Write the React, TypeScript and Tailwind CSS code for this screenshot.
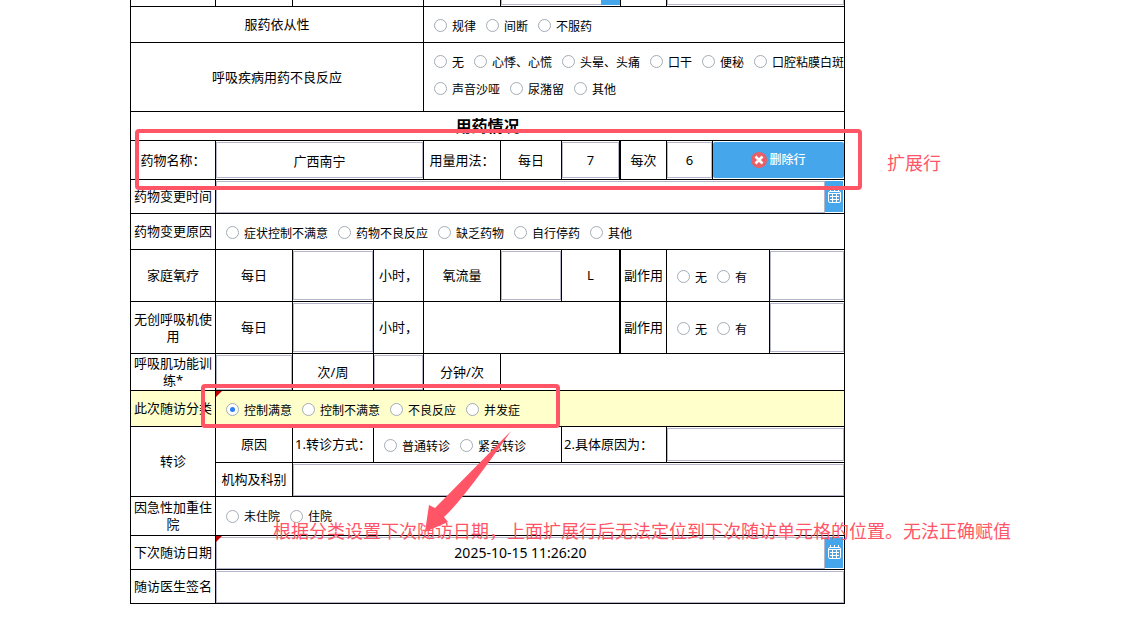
import { useState } from 'react';
import type { ReactNode } from 'react';

interface CellProps {
  children?: ReactNode;
  colSpan?: number;
  rowSpan?: number;
  className?: string;
}

interface RadioGroupProps {
  name: string;
  options: string[];
  defaultValue?: string;
}

interface FieldProps {
  label: string;
  defaultValue?: string;
  className: string;
}

function Cell({ children, colSpan, rowSpan, className = '' }: CellProps) {
  return (
    <td
      colSpan={colSpan}
      rowSpan={rowSpan}
      className={`border-r border-b border-black text-center align-middle ${className}`}
    >
      {children}
    </td>
  );
}

function RadioGroup({ name, options, defaultValue = '' }: RadioGroupProps) {
  const [value, setValue] = useState(defaultValue);

  return (
    <div className="-mr-1 flex flex-wrap gap-x-[10px] gap-y-[11px] pt-0.5 pl-[10px]">
      {options.map((option) => (
        <label key={option} className="flex h-4 items-center gap-[5px] text-xs leading-4 whitespace-nowrap">
          <input
            type="radio"
            name={name}
            value={option}
            checked={value === option}
            onChange={() => setValue(option)}
            className="m-0 flex size-[13px] shrink-0 appearance-none items-center justify-center rounded-full border border-[#a3acb5] bg-white checked:before:block checked:before:size-[5px] checked:before:rounded-full checked:before:bg-[#2d7ff0] checked:before:content-['']"
          />
          <span className="pt-0.5">{option}</span>
        </label>
      ))}
    </div>
  );
}

function Field({ label, defaultValue, className }: FieldProps) {
  return (
    <input
      type="text"
      aria-label={label}
      defaultValue={defaultValue}
      className={`block w-full min-w-0 rounded-none border border-[#b4b5c9] bg-white p-0 text-center outline-none ${className}`}
    />
  );
}

function CalendarIcon() {
  return (
    <svg width="13" height="14" viewBox="0 0 13 14" fill="none" stroke="white">
      <rect x="0.5" y="2.5" width="12" height="11" rx="1.5" />
      <path d="M2.5 0v3M6.5 0v3M10.5 0v3" />
      <path d="M1 4.5h11M2 7.5h9M2 10.5h9M4.5 5v8M8.5 5v8" />
    </svg>
  );
}

function DateField({ label, defaultValue }: { label: string; defaultValue?: string }) {
  return (
    <div className="flex h-8">
      <Field label={label} defaultValue={defaultValue} className="h-8 flex-1 text-sm" />
      <button
        type="button"
        aria-label={`选择${label}`}
        className="mr-px flex h-[31px] w-[18px] shrink-0 items-center justify-center bg-[#46a6eb]"
      >
        <CalendarIcon />
      </button>
    </div>
  );
}

function RequiredMark() {
  return (
    <svg className="absolute top-0 left-0" width="6" height="6" viewBox="0 0 6 6">
      <path d="M0 0h6L0 6z" fill="#c00000" />
    </svg>
  );
}

function Annotations() {
  return (
    <div className="pointer-events-none absolute inset-0 text-lg leading-6 whitespace-nowrap text-[#ff5566]">
      <div className="absolute top-[129px] left-[135px] h-[61px] w-[727px] rounded-sm border-4 border-[#ff5566]" />
      <p className="absolute top-[151px] left-[887px]">扩展行</p>
      <div className="absolute top-[384px] left-[201px] h-11 w-[359px] rounded-sm border-4 border-[#ff5566]" />
      <svg className="absolute top-[425px] left-[410px]" width="110" height="115" viewBox="0 0 110 115">
        <path d="M101 6L25 83L19 80L15 107L38 97L34 92Q52 76 101 6z" fill="#ff5566" />
      </svg>
      <p className="absolute top-[519px] left-[273px]">
        根据分类设置下次随访日期，上面扩展行后无法定位到下次随访单元格的位置。无法正确赋值
      </p>
    </div>
  );
}

const ADVERSE_REACTIONS = [
  '无',
  '心悸、心慌',
  '头晕、头痛',
  '口干',
  '便秘',
  '口腔粘膜白斑',
  '声音沙哑',
  '尿潴留',
  '其他',
];

export default function App() {
  return (
    <main className="relative min-h-screen overflow-hidden bg-white pl-[130px] font-['Noto_Sans','Noto_Sans_CJK_SC',sans-serif] text-[13px] leading-[17px] text-black">
      <table className="w-full max-w-[715px] table-fixed border-separate border-spacing-0 border-l border-black">
        <colgroup>
          <col className="w-[85px]" />
          <col className="w-[77px]" />
          <col className="w-[81px]" />
          <col className="w-[50px]" />
          <col className="w-[77px]" />
          <col className="w-[61px]" />
          <col className="w-[59px]" />
          <col className="w-[46px]" />
          <col className="w-[46px]" />
          <col className="w-[57px]" />
          <col className="w-[75px]" />
        </colgroup>
        <tbody>
          <tr className="h-[7px]">
            <Cell />
            <Cell />
            <Cell colSpan={2} />
            <Cell />
            <Cell colSpan={2}>
              <div className="flex h-[6px] border-b border-white">
                <div className="flex-1 border-b border-l border-[#b4b5c9]" />
                <div className="w-[19px] bg-[#46a6eb]" />
              </div>
            </Cell>
            <Cell />
            <Cell colSpan={3}>
              <div className="h-[6px] border-b border-white">
                <div className="h-[5px] border-x border-b border-[#b4b5c9]" />
              </div>
            </Cell>
          </tr>
          <tr className="h-9">
            <Cell colSpan={4}>服药依从性</Cell>
            <Cell colSpan={7}>
              <RadioGroup name="compliance" options={['规律', '间断', '不服药']} />
            </Cell>
          </tr>
          <tr className="h-[69px]">
            <Cell colSpan={4}>呼吸疾病用药不良反应</Cell>
            <Cell colSpan={7} className="pb-1.5">
              <RadioGroup name="adverse" options={ADVERSE_REACTIONS} />
            </Cell>
          </tr>
          <tr className="h-[29px]">
            <Cell colSpan={11} className="text-base leading-5 font-bold">
              用药情况
            </Cell>
          </tr>
          <tr className="h-[39px]">
            <Cell>药物名称：</Cell>
            <Cell colSpan={3}>
              <Field label="药物名称" defaultValue="广西南宁" className="h-9" />
            </Cell>
            <Cell>用量用法：</Cell>
            <Cell>每日</Cell>
            <Cell className="border-r-2">
              <Field label="每日" defaultValue="7" className="h-9" />
            </Cell>
            <Cell>每次</Cell>
            <Cell>
              <Field label="每次" defaultValue="6" className="h-9" />
            </Cell>
            <Cell colSpan={2}>
              <button
                type="button"
                className="flex h-9 w-full items-center justify-center gap-0.5 rounded-xs bg-[#46a6eb] text-xs font-medium text-white"
              >
                <svg width="16" height="16" viewBox="0 0 16 16">
                  <circle cx="8" cy="8" r="8" fill="#e95f65" />
                  <path d="M4.5 4.5l7 7M11.5 4.5l-7 7" stroke="white" strokeWidth="2.6" />
                </svg>
                删除行
              </button>
            </Cell>
          </tr>
          <tr className="h-[34px]">
            <Cell>药物变更时间</Cell>
            <Cell colSpan={10}>
              <DateField label="药物变更时间" />
            </Cell>
          </tr>
          <tr className="h-9">
            <Cell>药物变更原因</Cell>
            <Cell colSpan={10}>
              <RadioGroup
                name="changeReason"
                options={['症状控制不满意', '药物不良反应', '缺乏药物', '自行停药', '其他']}
              />
            </Cell>
          </tr>
          <tr className="h-[52px]">
            <Cell>家庭氧疗</Cell>
            <Cell>每日</Cell>
            <Cell>
              <Field label="氧疗小时" className="h-[49px]" />
            </Cell>
            <Cell>小时，</Cell>
            <Cell>氧流量</Cell>
            <Cell>
              <Field label="氧流量" className="h-[49px]" />
            </Cell>
            <Cell className="border-r-2">L</Cell>
            <Cell>副作用</Cell>
            <Cell colSpan={2}>
              <RadioGroup name="oxygenEffect" options={['无', '有']} />
            </Cell>
            <Cell>
              <Field label="氧疗副作用" className="h-[49px]" />
            </Cell>
          </tr>
          <tr className="h-[52px]">
            <Cell>无创呼吸机使用</Cell>
            <Cell>每日</Cell>
            <Cell>
              <Field label="呼吸机小时" className="h-[49px]" />
            </Cell>
            <Cell>小时，</Cell>
            <Cell colSpan={3} className="border-r-2" />
            <Cell>副作用</Cell>
            <Cell colSpan={2}>
              <RadioGroup name="ventilatorEffect" options={['无', '有']} />
            </Cell>
            <Cell>
              <Field label="呼吸机副作用" className="h-[49px]" />
            </Cell>
          </tr>
          <tr className="h-[37px]">
            <Cell>呼吸肌功能训练*</Cell>
            <Cell>
              <Field label="次/周" className="h-[35px]" />
            </Cell>
            <Cell>次/周</Cell>
            <Cell>
              <Field label="分钟/次" className="h-[35px]" />
            </Cell>
            <Cell>分钟/次</Cell>
            <Cell colSpan={6} />
          </tr>
          <tr className="h-9 bg-[#ffffcc]">
            <Cell>此次随访分类</Cell>
            <Cell colSpan={10} className="relative">
              <RequiredMark />
              <RadioGroup
                name="category"
                options={['控制满意', '控制不满意', '不良反应', '并发症']}
                defaultValue="控制满意"
              />
            </Cell>
          </tr>
          <tr className="h-9">
            <Cell rowSpan={2}>转诊</Cell>
            <Cell>原因</Cell>
            <Cell className="pl-0.5 text-left whitespace-nowrap">1.转诊方式：</Cell>
            <Cell colSpan={3}>
              <RadioGroup name="referral" options={['普通转诊', '紧急转诊']} />
            </Cell>
            <Cell colSpan={2} className="pl-0.5 text-left whitespace-nowrap">
              2.具体原因为：
            </Cell>
            <Cell colSpan={3}>
              <Field label="具体原因为" className="h-[33px]" />
            </Cell>
          </tr>
          <tr className="h-[34px]">
            <Cell>机构及科别</Cell>
            <Cell colSpan={9}>
              <Field label="机构及科别" className="h-8" />
            </Cell>
          </tr>
          <tr className="h-[39px]">
            <Cell>因急性加重住院</Cell>
            <Cell colSpan={10} className="pb-0.5">
              <RadioGroup name="hospital" options={['未住院', '住院']} />
            </Cell>
          </tr>
          <tr className="h-[34px]">
            <Cell>下次随访日期</Cell>
            <Cell colSpan={10} className="relative">
              <DateField label="下次随访日期" defaultValue="2025-10-15 11:26:20" />
              <RequiredMark />
            </Cell>
          </tr>
          <tr className="h-[34px]">
            <Cell>随访医生签名</Cell>
            <Cell colSpan={10}>
              <Field label="随访医生签名" className="h-8" />
            </Cell>
          </tr>
        </tbody>
      </table>
      <Annotations />
    </main>
  );
}
